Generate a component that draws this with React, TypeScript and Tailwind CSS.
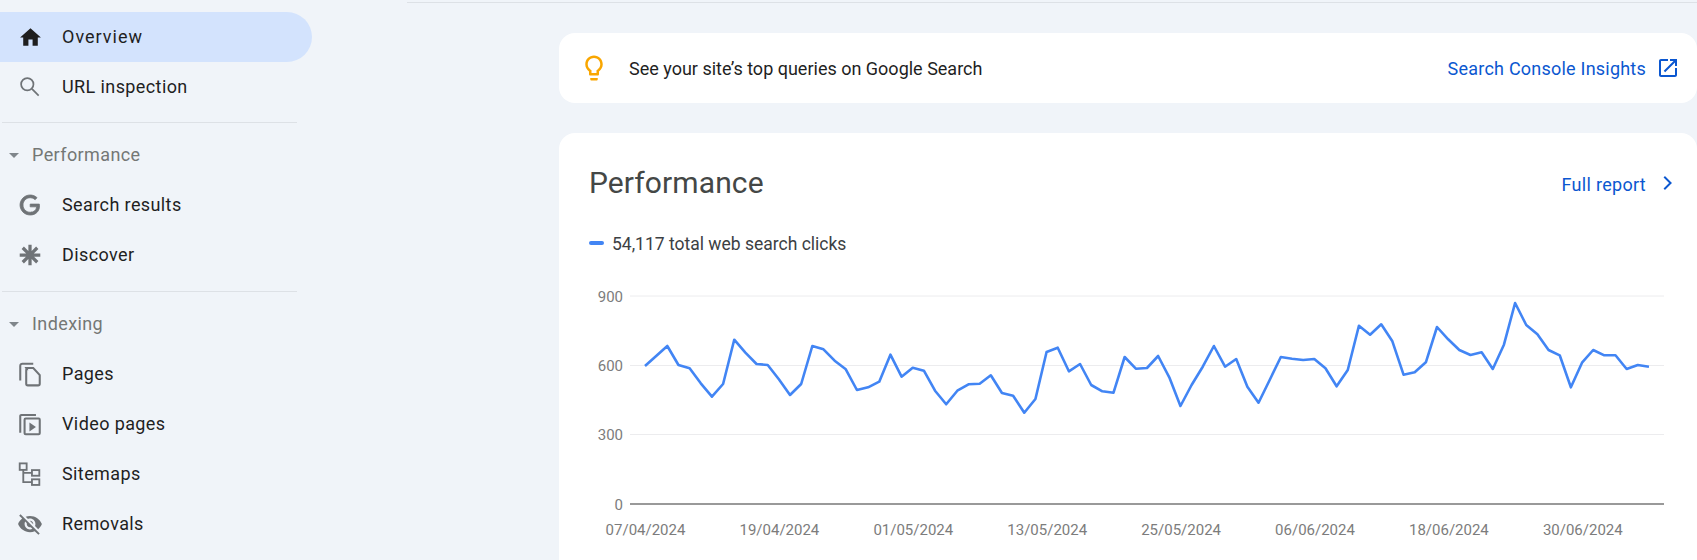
import React from 'react';

const ICONS = {
  home: 'M10 20v-6h4v6h5v-8h3L12 3 2 12h3v8z',
  google:
    'M21.35 11.1h-9.17v2.73h6.51c-.33 3.81-3.5 5.44-6.5 5.44C8.36 19.27 5 16.25 5 12c0-4.1 3.2-7.27 7.2-7.27 3.09 0 4.9 1.97 4.9 1.97L19 4.72S16.56 2 12.1 2C6.42 2 2.03 6.8 2.03 12c0 5.05 4.13 10 10.22 10 5.35 0 9.25-3.67 9.25-9.09 0-1.15-.15-1.81-.15-1.81z',
  removals:
    'M12 7c2.76 0 5 2.24 5 5 0 .65-.13 1.26-.36 1.83l2.92 2.92c1.51-1.26 2.7-2.89 3.43-4.75-1.73-4.39-6-7.5-11-7.5-1.4 0-2.74.25-3.98.7l2.16 2.16C10.74 7.13 11.35 7 12 7zM2 4.27l2.28 2.28.46.46C3.08 8.3 1.78 10.02 1 12c1.73 4.39 6 7.5 11 7.5 1.55 0 3.03-.3 4.38-.84l.42.42L19.73 22 21 20.73 3.27 3 2 4.27zM7.53 9.8l1.55 1.55c-.05.21-.08.43-.08.65 0 1.66 1.34 3 3 3 .22 0 .44-.03.65-.08l1.55 1.55c-.67.33-1.41.53-2.2.53-2.76 0-5-2.24-5-5 0-.79.2-1.53.53-2.2zm4.31-.78l3.15 3.15.02-.16c0-1.66-1.34-3-3-3l-.17.01z',
  bulb:
    'M9 21c0 .55.45 1 1 1h4c.55 0 1-.45 1-1v-1H9v1zm3-19C8.14 2 5 5.14 5 9c0 2.38 1.19 4.47 3 5.74V17c0 .55.45 1 1 1h6c.55 0 1-.45 1-1v-2.26c1.81-1.27 3-3.36 3-5.74 0-3.86-3.14-7-7-7zm2.85 11.1l-.85.6V16h-4v-2.3l-.85-.6C7.8 12.16 7 10.63 7 9c0-2.76 2.24-5 5-5s5 2.24 5 5c0 1.63-.8 3.16-2.15 4.1z',
  openInNew:
    'M19 19H5V5h7V3H5c-1.11 0-2 .9-2 2v14c0 1.1.89 2 2 2h14c1.1 0 2-.9 2-2v-7h-2v7zM14 3v2h3.59l-9.83 9.83 1.41 1.41L19 6.41V10h2V3h-7z',
};

const Icon = ({ d, className }: { d: string; className: string }) => (
  <svg viewBox="0 0 24 24" className={className} fill="currentColor">
    <path d={d} />
  </svg>
);

const StrokeIcon = ({ children, width }: { children: React.ReactNode; width: number }) => (
  <svg viewBox="0 0 24 24" className="w-[26px] h-[26px]" fill="none" stroke="currentColor" strokeWidth={width}>
    {children}
  </svg>
);

const SearchIcon = () => (
  <StrokeIcon width={1.6}>
    <circle cx="9.5" cy="9.5" r="5.7" />
    <path d="M13.8 13.8 20 20" />
  </StrokeIcon>
);

const GoogleIcon = () => (
  <svg viewBox="0 0 24 24" className="w-[24px] h-[24px]" fill="currentColor" stroke="currentColor" strokeWidth="0.8">
    <path d={ICONS.google} />
  </svg>
);

const DiscoverIcon = () => (
  <StrokeIcon width={3}>
    <path d="M12 2.5v19M2.5 12h19M5.3 5.3l13.4 13.4M5.3 18.7 18.7 5.3" />
  </StrokeIcon>
);

const PagesIcon = () => (
  <StrokeIcon width={1.9}>
    <path d="M15 2.5H5A2 2 0 0 0 3 4.5V18" />
    <path d="M8.5 6.5h6.5l6 6.5v8a1.5 1.5 0 0 1-1.5 1.5h-9.5a1.5 1.5 0 0 1-1.5-1.5v-13a.5.5 0 0 1 .5-.5z" />
  </StrokeIcon>
);

const VideoIcon = () => (
  <StrokeIcon width={1.9}>
    <path d="M17.5 3.7H4a1 1 0 0 0-1 1V20" />
    <rect x="7" y="7" width="14" height="14.5" rx="1" />
    <path d="M11.5 10.5v8.5l6-4.25z" fill="currentColor" stroke="none" />
  </StrokeIcon>
);

const SitemapIcon = () => (
  <StrokeIcon width={1.7}>
    <rect x="2.5" y="2.2" width="6.4" height="6" />
    <rect x="13.8" y="8.4" width="6.8" height="5.2" />
    <rect x="13.8" y="16.9" width="6.8" height="5.2" />
    <path d="M5.8 8.2v11.3h8M5.8 11h8" />
  </StrokeIcon>
);

const NavRow = ({
  icon,
  label,
  active,
  spacing = 'tracking-[0.4px]',
}: {
  icon: React.ReactNode;
  label: string;
  active?: boolean;
  spacing?: string;
}) => (
  <div className={`h-[50px] flex items-center pl-[17px] rounded-r-full ${active ? 'bg-[#d3e3fd]' : ''}`}>
    <span className={`w-[26px] h-[26px] flex items-center justify-center shrink-0 ${active ? 'text-[#1f1f1f]' : 'text-[#6f7377]'}`}>
      {icon}
    </span>
    <span className={`ml-[19px] pb-[2px] text-[18px] text-[#1f1f1f] ${spacing}`}>{label}</span>
  </div>
);

const GroupHeader = ({ label }: { label: string }) => (
  <div className="h-[50px] flex items-center pl-[9px]">
    <span className="w-0 h-0 border-x-[5.5px] border-x-transparent border-t-[5.5px] border-t-[#80868b]" />
    <span className="ml-[13px] pb-[2px] text-[18px] tracking-[0.4px] text-[#747775]">{label}</span>
  </div>
);

// y taken from the reference, as 1/3 px offsets from the top of the chart
const LINE = [
  288, 258, 228, 285, 295, 340, 380, 342, 209, 248, 282, 285, 328, 375, 342, 228, 238, 272, 298, 360, 352, 335, 254,
  320, 293, 302, 362, 403, 362, 343, 341, 316, 369, 377, 428, 387, 246, 233, 304, 282, 345, 364, 368, 261, 296, 294,
  258, 322, 408, 345, 290, 228, 290, 267, 350, 398, 330, 261, 266, 270, 267, 295, 349, 300, 167, 194, 163, 214, 314,
  307, 277, 171, 208, 240, 255, 247, 297, 224, 99, 165, 193, 240, 256, 352, 278, 240, 256, 256, 297, 285, 290,
];

const DATES = ['07/04/2024', '19/04/2024', '01/05/2024', '13/05/2024', '25/05/2024', '06/06/2024', '18/06/2024', '30/06/2024'];

const Chart = () => {
  const points = LINE.map((y, i) => `${86 + i * 11.155},${(y / 3).toFixed(1)}`).join(' ');
  return (
    <svg width="1138" height="280" className="block font-[Roboto]">
      {[
        { label: '900', y: 26 },
        { label: '600', y: 95.5 },
        { label: '300', y: 164.5 },
      ].map(t => (
        <g key={t.label}>
          <line x1="71" x2="1105" y1={t.y} y2={t.y} stroke="#ececee" strokeWidth="1" />
          <text x="64" y={t.y + 5.5} textAnchor="end" fontSize="15" fill="#7c7c7c">
            {t.label}
          </text>
        </g>
      ))}
      <text x="64" y="239.5" textAnchor="end" fontSize="15" fill="#7c7c7c">
        0
      </text>
      <line x1="71" x2="1105" y1="234" y2="234" stroke="#999999" strokeWidth="2" />
      <polyline points={points} fill="none" stroke="#4285f4" strokeWidth="2.6" strokeLinejoin="round" />
      {DATES.map((d, i) => (
        <text key={d} x={86.5 + i * 133.9} y="265" textAnchor="middle" fontSize="15" fill="#7c7c7c">
          {d}
        </text>
      ))}
    </svg>
  );
};

export default function App() {
  return (
    <div className="w-[1697px] h-[560px] overflow-hidden bg-[#f0f4f9] flex font-[Roboto]">
      {/* Sidebar */}
      <div className="w-[312px] shrink-0 pt-[12px]">
        <NavRow active spacing="tracking-[1px]" label="Overview" icon={<Icon d={ICONS.home} className="w-[25px] h-[25px]" />} />
        <NavRow label="URL inspection" icon={<SearchIcon />} />
        <div className="h-px w-[295px] ml-[2px] mt-[10px] mb-[7px] bg-[#dde1e6]" />
        <GroupHeader label="Performance" />
        <NavRow label="Search results" icon={<GoogleIcon />} />
        <NavRow label="Discover" icon={<DiscoverIcon />} />
        <div className="h-px w-[295px] ml-[2px] mt-[11px] mb-[7px] bg-[#dde1e6]" />
        <GroupHeader label="Indexing" />
        <NavRow label="Pages" icon={<PagesIcon />} />
        <NavRow label="Video pages" icon={<VideoIcon />} />
        <NavRow label="Sitemaps" icon={<SitemapIcon />} />
        <NavRow label="Removals" icon={<Icon d={ICONS.removals} className="w-[26px] h-[26px]" />} />
      </div>

      {/* Main */}
      <div className="flex-1 min-w-0">
        <div className="h-px ml-[95px] mt-[2px] bg-[#dde1e6]" />
        <div className="ml-[247px] mt-[30px]">
          <div className="h-[70px] bg-white rounded-2xl flex items-center pl-[20px] pr-[17px]">
            <Icon d={ICONS.bulb} className="w-[30px] h-[30px] text-[#f9a600]" />
            <span className="ml-[20px] pt-[1px] text-[18px] text-[#1f1f1f]">See your site’s top queries on Google Search</span>
            <span className="ml-auto pt-[1px] text-[18px] tracking-[0.22px] text-[#0b57d0]">Search Console Insights</span>
            <Icon d={ICONS.openInNew} className="ml-[10px] w-[24px] h-[24px] text-[#0b57d0]" />
          </div>

          <div className="mt-[30px] h-[440px] bg-white rounded-t-2xl">
            <div className="flex items-center h-[100px] pl-[30px] pr-[15px]">
              <span className="pb-[2px] text-[30px] tracking-[0.1px] text-[#444746]">Performance</span>
              <span className="ml-auto pt-[2px] text-[18px] tracking-[0.3px] text-[#0b57d0]">Full report</span>
              <svg viewBox="0 0 24 24" className="ml-[8px] w-[28px] h-[28px] text-[#0b57d0]" fill="none" stroke="currentColor" strokeWidth="1.7">
                <path d="M8.8 6.6 14.2 12l-5.4 5.4" />
              </svg>
            </div>
            <div className="flex items-center h-[20px] pl-[30px]">
              <span className="w-[15px] h-[4px] rounded-full bg-[#4285f4]" />
              <span className="ml-[8px] pt-[3px] text-[17.5px] text-[#3c4043]">54,117 total web search clicks</span>
            </div>
            <div className="mt-[17px]">
              <Chart />
            </div>
          </div>
        </div>
      </div>
    </div>
  );
}
